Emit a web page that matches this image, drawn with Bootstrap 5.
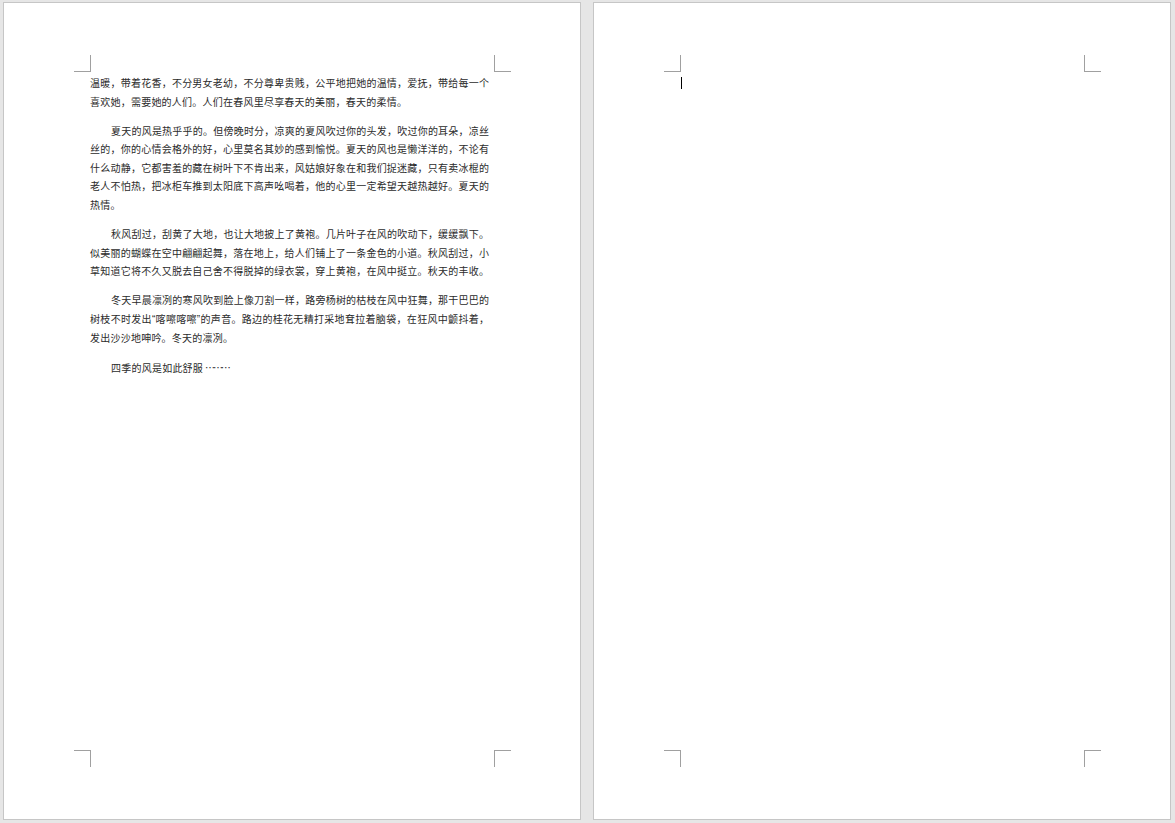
<!DOCTYPE html>
<html lang="zh-CN">
<head>
<meta charset="utf-8">
<title>文档</title>
<link href="https://cdn.jsdelivr.net/npm/bootstrap@5.3.0/dist/css/bootstrap.min.css" rel="stylesheet">
<style>
html,body{height:823px;overflow:hidden}
body{background:#e6e6e6;padding:2px 4px 3px 3px;font-family:"Noto Sans CJK SC","Liberation Sans",sans-serif}
.sheet{width:578px;height:818px;background:#fff;border:1px solid #c6c6c6;padding:52px 69px 52px 70px}
.gutter{width:12px}
.mark-row{height:17px}
.crop{width:17px;height:17px;border:0 solid #a0a0a0}
.crop-tl{border-right-width:1px;border-bottom-width:1px}
.crop-tr{border-left-width:1px;border-bottom-width:1px}
.crop-bl{border-right-width:1px;border-top-width:1px}
.crop-br{border-left-width:1px;border-top-width:1px}
.doc{width:399px;margin:2px 0 0 16px;font-size:10px;line-height:18.5px;color:#2b2b2b}
.para{margin:0 0 10.75px}
.ln{display:block;white-space:nowrap;text-align:justify;text-align-last:justify}
.ln-end{text-align-last:left;letter-spacing:.23px}
.ln-ind{padding-left:21px}
.quo{font-family:"Liberation Sans",sans-serif}
.dots{letter-spacing:-2.2px;margin-left:2px}
.caret{width:1px;height:12px;background:#000;margin:5px 0 0 17px}
</style>
</head>
<body class="d-flex gap-0">
<section class="sheet d-flex flex-column flex-shrink-0">
  <div class="mark-row d-flex justify-content-between"><div class="crop crop-tl"></div><div class="crop crop-tr"></div></div>
  <div class="doc flex-grow-1">
    <p class="para"><span class="ln">温暖，带着花香，不分男女老幼，不分尊卑贵贱，公平地把她的温情，爱抚，带给每一个</span><span class="ln ln-end">喜欢她，需要她的人们。人们在春风里尽享春天的美丽，春天的柔情。</span></p>
    <p class="para"><span class="ln ln-ind">夏天的风是热乎乎的。但傍晚时分，凉爽的夏风吹过你的头发，吹过你的耳朵，凉丝</span><span class="ln">丝的，你的心情会格外的好，心里莫名其妙的感到愉悦。夏天的风也是懒洋洋的，不论有</span><span class="ln">什么动静，它都害羞的藏在树叶下不肯出来，风姑娘好象在和我们捉迷藏，只有卖冰棍的</span><span class="ln">老人不怕热，把冰柜车推到太阳底下高声吆喝着，他的心里一定希望天越热越好。夏天的</span><span class="ln ln-end">热情。</span></p>
    <p class="para"><span class="ln ln-ind">秋风刮过，刮黄了大地，也让大地披上了黄袍。几片叶子在风的吹动下，缓缓飘下。</span><span class="ln">似美丽的蝴蝶在空中翩翩起舞，落在地上，给人们铺上了一条金色的小道。秋风刮过，小</span><span class="ln">草知道它将不久又脱去自己舍不得脱掉的绿衣裳，穿上黄袍，在风中挺立。秋天的丰收。</span></p>
    <p class="para"><span class="ln ln-ind">冬天早晨凛冽的寒风吹到脸上像刀割一样，路旁杨树的枯枝在风中狂舞，那干巴巴的</span><span class="ln">树枝不时发出<span class="quo">“</span>喀嚓喀嚓<span class="quo">”</span>的声音。路边的桂花无精打采地耷拉着脑袋，在狂风中颤抖着，</span><span class="ln ln-end">发出沙沙地呻吟。冬天的凛冽。</span></p>
    <p class="para"><span class="ln ln-end ln-ind">四季的风是如此舒服<span class="dots">………</span></span></p>
  </div>
  <div class="mark-row d-flex justify-content-between"><div class="crop crop-bl"></div><div class="crop crop-br"></div></div>
</section>
<div class="gutter flex-shrink-0"></div>
<section class="sheet d-flex flex-column flex-shrink-0">
  <div class="mark-row d-flex justify-content-between"><div class="crop crop-tl"></div><div class="crop crop-tr"></div></div>
  <div class="flex-grow-1"><div class="caret"></div></div>
  <div class="mark-row d-flex justify-content-between"><div class="crop crop-bl"></div><div class="crop crop-br"></div></div>
</section>
</body>
</html>
